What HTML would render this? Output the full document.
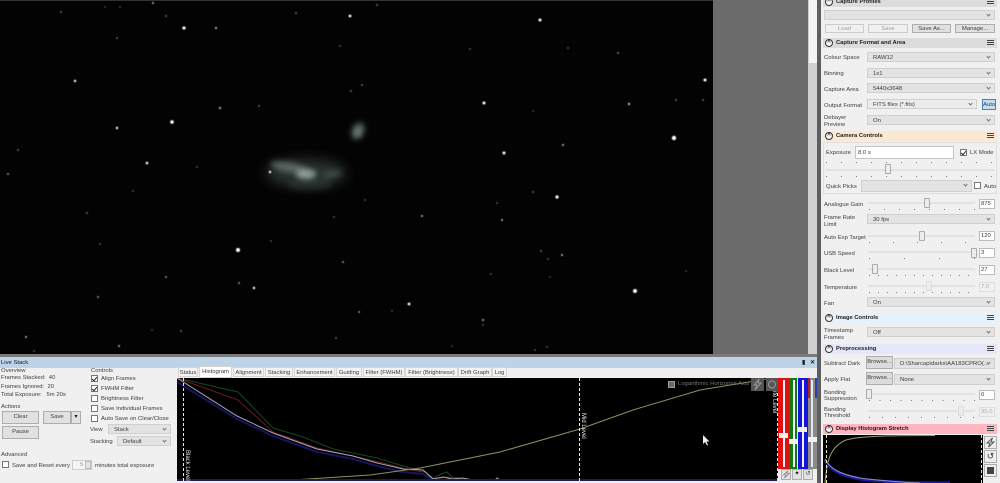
<!DOCTYPE html>
<html><head><meta charset="utf-8"><style>
html,body{margin:0;padding:0;background:#f0f0f0}
#r{position:relative;width:1000px;height:483px;overflow:hidden;font-family:"Liberation Sans",sans-serif;font-size:5.9px;color:#3c3c3c;background:#f0f0f0}
#r div,#r span.t{position:absolute}
.t{white-space:nowrap;line-height:8px;margin-top:1px;filter:blur(.2px)}
.c{background:#e3e3e3;border:1px solid #cfcfcf;box-sizing:border-box;height:10px;line-height:10px;padding-left:5px;white-space:nowrap;overflow:hidden}
.c:after{content:"";position:absolute;right:4px;top:2px;width:2px;height:2px;border-right:1px solid #777;border-bottom:1px solid #777;transform:rotate(45deg)}
.b{background:#e1e1e1;border:1px solid #adadad;box-sizing:border-box;text-align:center;white-space:nowrap}
.d{color:#a0a0a0;background:#f0f0f0;border-color:#ccc}
.h{left:823px;width:174px;height:10px;line-height:11px;font-weight:bold;font-size:5.8px;box-sizing:border-box;padding-left:13px;color:#222;white-space:nowrap}
.h:before{content:"^";position:absolute;left:2px;top:1px;width:6px;height:6px;border:1px solid #333;border-radius:50%;background:#f6f6f6;font-size:6px;line-height:7px;text-align:center;padding:0}
.h:after{content:"";position:absolute;right:3px;top:2px;width:7px;height:5px;background:repeating-linear-gradient(#444 0 1px,transparent 1px 2px)}
.k{height:1px;background:repeating-linear-gradient(90deg,#555 0 1px,transparent 1px 15px);opacity:.75}
.tr{height:2px;background:#e2e2e2;left:868px;width:107px}
.th{width:6px;height:10px;background:#ececec;border:1px solid #aaa;box-sizing:border-box;border-radius:1px}
.v{left:979px;width:16px;height:10px;background:#fff;border:1px solid #bbb;box-sizing:border-box;line-height:9px;padding-left:1px}
.x{width:7px;height:7px;background:#fff;border:1px solid #777;box-sizing:border-box}
.ck:after{content:"";position:absolute;left:1px;top:0;width:2px;height:4px;border-right:1px solid #222;border-bottom:1px solid #222;transform:rotate(40deg)}
.tb{top:367px;height:10px;line-height:10px;background:#f2f2f2;border:1px solid #d5d5d5;box-sizing:border-box;text-align:center;white-space:nowrap;overflow:hidden}
</style></head><body><div id="r">

<svg style="position:absolute;left:0;top:0" width="713" height="355" viewBox="0 0 713 355">
<defs>
<filter id="f1" x="-50%" y="-80%" width="200%" height="260%"><feGaussianBlur stdDeviation="6"/></filter>
<filter id="f2" x="-50%" y="-80%" width="200%" height="260%"><feGaussianBlur stdDeviation="3"/></filter>
<filter id="f3" x="-50%" y="-50%" width="200%" height="200%"><feGaussianBlur stdDeviation=".4"/></filter>
</defs>
<rect width="713" height="355" fill="#040304"/>
<rect width="713" height="1" fill="#333"/>
<ellipse cx="306" cy="173" rx="40" ry="14" fill="#4a5a55" opacity=".55" filter="url(#f1)"/>
<ellipse cx="310" cy="184" rx="22" ry="6" fill="#333f3a" opacity=".5" filter="url(#f2)"/>
<ellipse cx="288" cy="167" rx="18" ry="5" fill="#7f8f88" opacity=".6" filter="url(#f2)" transform="rotate(10 288 167)"/>
<ellipse cx="306" cy="174" rx="10" ry="5" fill="#b5c4bc" opacity=".75" filter="url(#f2)"/>
<ellipse cx="332" cy="174" rx="10" ry="3" fill="#5c6a64" opacity=".55" filter="url(#f2)" transform="rotate(-12 332 174)"/>
<ellipse cx="358" cy="131" rx="6" ry="9" fill="#71817a" opacity=".7" filter="url(#f2)" transform="rotate(25 358 131)"/>
<ellipse cx="358" cy="132" rx="3" ry="4" fill="#a0b0a8" opacity=".5" filter="url(#f2)"/>
<g fill="#fff" filter="url(#f3)">
<circle cx="184" cy="28" r="1.6"/><circle cx="350" cy="16" r="1.4"/><circle cx="172" cy="122" r="1.8"/><circle cx="147" cy="163" r="1.3"/><circle cx="117" cy="128" r="1.2"/>
<circle cx="540" cy="20" r="1.5"/><circle cx="484" cy="103" r="1.5"/><circle cx="504" cy="153" r="1.5"/><circle cx="674" cy="138" r="2.2"/><circle cx="705" cy="80" r="1.5"/>
<circle cx="238" cy="250" r="2"/><circle cx="254" cy="288" r="1.2"/><circle cx="557" cy="197" r="1.6"/><circle cx="409" cy="304" r="1.4"/><circle cx="635" cy="291" r="2"/><circle cx="270" cy="172" r="1.2"/><circle cx="75" cy="81" r="1.2"/>
</g>
<g fill="#bbb" filter="url(#f3)">
<circle cx="153" cy="3" r="1"/><circle cx="216" cy="28" r="1.1"/><circle cx="220" cy="108" r="1.1"/><circle cx="8" cy="174" r=".9"/><circle cx="563" cy="145" r="1"/><circle cx="629" cy="104" r="1.2"/><circle cx="343" cy="262" r=".9"/><circle cx="166" cy="277" r=".9"/><circle cx="98" cy="297" r=".9"/><circle cx="26" cy="337" r="1"/><circle cx="119" cy="346" r="1"/><circle cx="359" cy="312" r=".9"/><circle cx="422" cy="216" r="1"/><circle cx="502" cy="220" r="1"/><circle cx="562" cy="255" r="1"/><circle cx="483" cy="320" r="1"/><circle cx="239" cy="283" r=".9"/>
</g>
<g fill="#666" filter="url(#f3)">
<circle cx="61" cy="12" r="1"/><circle cx="117" cy="38" r="1"/><circle cx="18" cy="150" r="1"/><circle cx="197" cy="167" r=".9"/><circle cx="351" cy="91" r="1"/><circle cx="340" cy="46" r=".9"/><circle cx="259" cy="106" r="1"/><circle cx="166" cy="16" r="1"/><circle cx="296" cy="13" r="1"/><circle cx="120" cy="7" r=".8"/><circle cx="105" cy="7" r=".8"/>
<circle cx="703" cy="100" r="1"/><circle cx="676" cy="100" r="1"/><circle cx="618" cy="53" r="1.1"/><circle cx="470" cy="49" r=".9"/><circle cx="568" cy="48" r=".9"/><circle cx="377" cy="5" r="1"/><circle cx="362" cy="85" r="1"/><circle cx="533" cy="111" r=".8"/>
<circle cx="271" cy="241" r=".9"/><circle cx="334" cy="217" r=".9"/><circle cx="336" cy="338" r="1"/><circle cx="181" cy="331" r="1"/><circle cx="87" cy="213" r="1"/><circle cx="133" cy="191" r=".9"/><circle cx="100" cy="244" r=".9"/><circle cx="152" cy="330" r=".8"/><circle cx="34" cy="351" r=".9"/>
<circle cx="541" cy="251" r="1"/><circle cx="548" cy="259" r=".9"/><circle cx="483" cy="325" r=".9"/><circle cx="533" cy="192" r="1"/><circle cx="497" cy="203" r=".9"/><circle cx="491" cy="274" r=".9"/><circle cx="686" cy="271" r=".8"/><circle cx="365" cy="200" r=".9"/><circle cx="550" cy="277" r=".8"/><circle cx="392" cy="311" r=".8"/><circle cx="452" cy="346" r=".8"/><circle cx="535" cy="350" r=".9"/><circle cx="547" cy="347" r=".9"/>
</g>
</svg>

<div style="left:713px;top:0;width:95px;height:355px;background:#6b6b6b"></div>
<div style="left:808px;top:0;width:10px;height:355px;background:#d0d0d0"></div>
<div style="left:809px;top:0;width:8px;height:63px;background:#f3f3f3"></div>
<div style="left:817px;top:0;width:4px;height:483px;background:#5e5e5e"></div>
<div style="left:0;top:354px;width:817px;height:3px;background:#7a7a7a"></div>

<!-- Live stack panel -->
<div style="left:0;top:357px;width:817px;height:126px;background:#f0f0f0"></div>
<div style="left:0;top:357px;width:817px;height:11px;background:#bcd3e8"></div>
<span class="t" style="left:1px;top:358px;color:#111">Live Stack</span>
<span class="t" style="left:802px;top:358px;color:#222;font-weight:bold">▮</span>
<span class="t" style="left:810px;top:358px;color:#222;font-weight:bold">✕</span>

<span class="t" style="left:1px;top:366px">Overview</span>
<span class="t" style="left:1px;top:373px">Frames Stacked:&nbsp; 40</span>
<span class="t" style="left:1px;top:382px">Frames Ignored:&nbsp; 20</span>
<span class="t" style="left:1px;top:390px">Total Exposure:&nbsp;&nbsp; 5m 20s</span>
<span class="t" style="left:1px;top:402px">Actions</span>
<div class="b" style="left:2px;top:411px;width:37px;height:13px;line-height:11px">Clear</div>
<div class="b" style="left:2px;top:426px;width:37px;height:13px;line-height:11px">Pause</div>
<div class="b" style="left:43px;top:411px;width:28px;height:13px;line-height:11px">Save</div>
<div class="b" style="left:71px;top:411px;width:10px;height:13px;line-height:10px;font-size:6px;color:#111">▾</div>
<span class="t" style="left:1px;top:450px">Advanced</span>
<div class="x" style="left:2px;top:461px"></div>
<span class="t" style="left:12px;top:461px">Save and Reset every</span>
<div class="b" style="left:72px;top:460px;width:20px;height:10px;background:#f4f4f4;color:#999;line-height:9px;text-align:left;padding-left:7px;border-color:#ccc">5</div>
<div style="left:85px;top:461px;width:6px;height:8px;background:#e4e4e4;border:1px solid #bbb;box-sizing:border-box"></div>
<span class="t" style="left:95px;top:461px">minutes total exposure</span>

<span class="t" style="left:91px;top:366px">Controls</span>
<div class="x ck" style="left:91px;top:375px"></div><span class="t" style="left:101px;top:374px">Align Frames</span>
<div class="x ck" style="left:91px;top:385px"></div><span class="t" style="left:101px;top:384px">FWHM Filter</span>
<div class="x" style="left:91px;top:395px"></div><span class="t" style="left:101px;top:394px">Brightness Filter</span>
<div class="x" style="left:91px;top:405px"></div><span class="t" style="left:101px;top:404px">Save Individual Frames</span>
<div class="x" style="left:91px;top:415px"></div><span class="t" style="left:101px;top:414px">Auto Save on Clear/Close</span>
<span class="t" style="left:90px;top:425px">View</span>
<div class="c" style="left:108px;top:424px;width:63px">Stack</div>
<span class="t" style="left:90px;top:437px">Stacking</span>
<div class="c" style="left:117px;top:436px;width:54px">Default</div>

<!-- tabs -->
<div class="tb" style="left:178px;width:20px">Status</div>
<div class="tb" style="left:199px;width:33px;top:366px;height:12px;background:#fff">Histogram</div>
<div class="tb" style="left:233px;width:31px">Alignment</div>
<div class="tb" style="left:265px;width:28px">Stacking</div>
<div class="tb" style="left:294px;width:41px">Enhancement</div>
<div class="tb" style="left:336px;width:26px">Guiding</div>
<div class="tb" style="left:363px;width:42px">Filter (FWHM)</div>
<div class="tb" style="left:405px;width:53px">Filter (Brightness)</div>
<div class="tb" style="left:458px;width:34px">Drift Graph</div>
<div class="tb" style="left:492px;width:15px">Log</div>

<!-- histogram -->
<svg style="position:absolute;left:177px;top:378px" width="601" height="103" viewBox="177 378 601 103">
<rect x="177" y="378" width="601" height="103" fill="#000"/>
<g fill="none" stroke-width="1">
<polyline stroke="#17471e" points="177,378 238,392 273,428 303,437 333,449 377,458 410,468 423,470 433,478 441,474 447,472 453,478 470,479"/>
<polyline stroke="#6b1d1d" points="177,378 238,400 273,432 317,448 357,457 383,463 410,470 425,472 433,479 447,477 470,479"/>
<polyline stroke="#15155e" stroke-width="2" points="177,382 237,419 273,436 317,452 353,459 377,466 403,472 423,474 433,480"/>
<polyline stroke="#a5a5b5" points="177,378 237,416 273,433 317,449 353,456 377,463 403,469 423,470 433,479 443,477 452,479 463,478 472,480 495,480 497,478 500,480"/>
<polyline stroke="#8f8f5f" points="177,480 300,479.500 370,475 420,468 500,452 580,429 633,410 700,390 767,379 778,378"/>
</g>
<rect x="177" y="479" width="601" height="2" fill="#1a1a55"/>
<line x1="183.500" y1="378" x2="183.500" y2="481" stroke="#f2efb0" stroke-dasharray="3 2"/>
<line x1="579.500" y1="378" x2="579.500" y2="481" stroke="#f2efb0" stroke-dasharray="3 2"/>
<line x1="777.500" y1="378" x2="777.500" y2="481" stroke="#f2efb0" stroke-dasharray="3 2"/>
<text x="0" y="0" transform="translate(186 450) rotate(90)" font-size="6" fill="#eee" font-family="Liberation Sans">Black Level</text>
<text x="0" y="0" transform="translate(582 413) rotate(90)" font-size="6" fill="#eee" font-family="Liberation Sans">Mid Level</text>
<text x="0" y="0" transform="translate(773 382) rotate(90)" font-size="6" fill="#eee" font-family="Liberation Sans">White Level</text>
</svg>
<div style="left:668px;top:381px;width:7px;height:7px;background:#6a6a6a;border:1px solid #999;box-sizing:border-box"></div>
<span class="t" style="left:678px;top:379px;color:#777">Logarithmic Horizontal Axis</span>
<div style="left:751px;top:378px;width:13px;height:13px;background:#555"></div>
<div style="left:766px;top:378px;width:12px;height:13px;background:#555"></div>
<svg style="position:absolute;left:751px;top:378px" width="27" height="13" viewBox="0 0 27 13"><path d="M8 1L3 7H6L4 12L10 5H7Z" fill="none" stroke="#999"/><circle cx="21" cy="6.500" r="3.500" fill="none" stroke="#999"/></svg>
<svg style="position:absolute;left:702px;top:435px" width="8" height="11" viewBox="0 0 8 11"><path d="M1 0V9L3 7L5 10.500L6 10L4.500 6.500H7.500Z" fill="#eee"/></svg>

<!-- channel sliders -->
<div style="left:778px;top:378px;width:11px;height:91px;background:#e01010"></div>
<div style="left:789px;top:378px;width:8px;height:91px;background:#117a11"></div>
<div style="left:798px;top:378px;width:10px;height:91px;background:#1414dd"></div>
<div style="left:808px;top:378px;width:9px;height:91px;background:#8a8a8a"></div>
<div style="left:808px;top:378px;width:2px;height:20px;background:#b02020"></div>
<div style="left:815px;top:378px;width:2px;height:20px;background:#2a3fb0"></div>
<div style="left:783px;top:380px;width:2px;height:87px;background:#f2f2f2"></div>
<div style="left:793px;top:380px;width:2px;height:87px;background:#f2f2f2"></div>
<div style="left:802px;top:380px;width:2px;height:87px;background:#f2f2f2"></div>
<div style="left:811px;top:380px;width:2px;height:87px;background:#e8e8e8"></div>
<div style="left:779px;top:433px;width:9px;height:5px;background:#f0f0f0"></div>
<div style="left:789px;top:439px;width:9px;height:5px;background:#f0f0f0"></div>
<div style="left:798px;top:427px;width:9px;height:5px;background:#f0f0f0"></div>
<div style="left:808px;top:437px;width:9px;height:5px;background:#f0f0f0"></div>
<div class="b" style="left:781px;top:469px;width:10px;height:11px"></div>
<svg style="position:absolute;left:782px;top:470px" width="8" height="9" viewBox="0 0 10 11"><path d="M7 1L2 6H5L3 10L9 4H6Z" fill="none" stroke="#888"/></svg>
<div class="b" style="left:792px;top:469px;width:10px;height:11px;line-height:9px;color:#111">✦</div>
<div class="b" style="left:803px;top:469px;width:10px;height:11px;line-height:9px">↺</div>

<!-- Right panel -->
<div style="left:821px;top:0;width:179px;height:483px;background:#f0f0f0"></div>
<div class="h" style="top:-3px;background:#dcdcdc;">Capture Profiles</div>
<div class="c" style="left:824px;top:10px;width:171px"></div>
<div class="b d" style="left:825px;top:24px;width:39px;height:9px;line-height:8px">Load</div>
<div class="b d" style="left:868px;top:24px;width:40px;height:9px;line-height:8px">Save</div>
<div class="b" style="left:912px;top:24px;width:39px;height:9px;line-height:8px">Save As...</div>
<div class="b" style="left:955px;top:24px;width:40px;height:9px;line-height:8px">Manage...</div>

<div class="h" style="top:38px;background:#dcdcdc">Capture Format and Area</div>
<span class="t" style="left:824px;top:53px">Colour Space</span><div class="c" style="left:867px;top:52px;width:128px">RAW12</div>
<span class="t" style="left:824px;top:69px">Binning</span><div class="c" style="left:867px;top:68px;width:128px">1x1</div>
<span class="t" style="left:824px;top:85px">Capture Area</span><div class="c" style="left:867px;top:83px;width:128px">5440x3648</div>
<span class="t" style="left:824px;top:101px">Output Format</span><div class="c" style="left:867px;top:99px;width:110px;background:#ececec">FITS files (*.fits)</div>
<div class="b" style="left:982px;top:99px;width:14px;height:11px;background:#c6def2;border-color:#3d84c0;line-height:10px">Auto</div>
<span class="t" style="left:824px;top:113px">Debayer</span><span class="t" style="left:824px;top:120px">Preview</span><div class="c" style="left:867px;top:115px;width:128px">On</div>

<div class="h" style="top:131px;background:#fbe8d2">Camera Controls</div>
<div style="left:823px;top:142px;width:174px;height:52px;border:1px solid #dedede;box-sizing:border-box"></div>
<span class="t" style="left:826px;top:148px">Exposure</span>
<div style="left:855px;top:146px;width:99px;height:13px;background:#fff;border:1px solid #c4c4c4;box-sizing:border-box;line-height:12px;padding-left:2px">8.0 s</div>
<div class="x ck" style="left:960px;top:149px"></div><span class="t" style="left:970px;top:148px">LX Mode</span>
<div class="k" style="left:826px;top:162px;width:168px"></div>
<div class="tr" style="left:826px;top:169px;width:168px"></div>
<div class="th" style="left:885px;top:164px"></div>
<div class="k" style="left:826px;top:176px;width:168px"></div>
<span class="t" style="left:826px;top:182px">Quick Picks</span>
<div class="c" style="left:861px;top:180px;width:111px;height:12px"></div>
<div class="x" style="left:974px;top:182px"></div><span class="t" style="left:984px;top:182px">Auto</span>

<span class="t" style="left:824px;top:200px">Analogue Gain</span>
<div class="tr" style="top:202px"></div><div class="th" style="left:924px;top:198px"></div><div class="k" style="left:869px;top:209px;width:106px"></div><div class="v" style="top:199px">875</div>
<span class="t" style="left:824px;top:213px">Frame Rate</span><span class="t" style="left:824px;top:220px">Limit</span><div class="c" style="left:867px;top:214px;width:128px">30 fps</div>
<span class="t" style="left:824px;top:233px">Auto Exp Target</span>
<div class="tr" style="top:235px"></div><div class="th" style="left:919px;top:231px"></div><div class="k" style="left:869px;top:242px;width:106px;background:repeating-linear-gradient(90deg,#555 0 1px,transparent 1px 24px)"></div><div class="v" style="top:231px">120</div>
<span class="t" style="left:824px;top:249px">USB Speed</span>
<div class="tr" style="top:251px"></div><div class="th" style="left:971px;top:248px"></div><div class="k" style="left:869px;top:258px;width:106px;background:repeating-linear-gradient(90deg,#555 0 1px,transparent 1px 35px)"></div><div class="v" style="top:248px">3</div>
<span class="t" style="left:824px;top:266px">Black Level</span>
<div class="tr" style="top:268px"></div><div class="th" style="left:872px;top:264px"></div><div class="k" style="left:869px;top:275px;width:106px;background:repeating-linear-gradient(90deg,#555 0 1px,transparent 1px 9px)"></div><div class="v" style="top:265px">27</div>
<span class="t" style="left:824px;top:283px">Temperature</span>
<div class="tr" style="top:285px"></div><div class="th" style="left:926px;top:281px;border-color:#ddd"></div><div class="k" style="left:869px;top:292px;width:106px;background:repeating-linear-gradient(90deg,#555 0 1px,transparent 1px 9px)"></div><div class="v" style="top:282px;background:#f0f0f0;color:#aaa;border-color:#ddd">7.0</div>
<span class="t" style="left:824px;top:299px">Fan</span><div class="c" style="left:867px;top:297px;width:128px">On</div>

<div class="h" style="top:313px;background:#e5f1fb">Image Controls</div>
<span class="t" style="left:824px;top:326px">Timestamp</span><span class="t" style="left:824px;top:333px">Frames</span><div class="c" style="left:867px;top:327px;width:128px">Off</div>

<div class="h" style="top:344px;background:#e6e6fa">Preprocessing</div>
<span class="t" style="left:824px;top:359px">Subtract Dark</span>
<div class="b" style="left:866px;top:356px;width:27px;height:13px;line-height:11px;background:#dcdcdc">Browse...</div>
<div class="c" style="left:894px;top:358px;width:101px;height:11px">D:\Sharcap\darks\AA183CPRO(...</div>
<span class="t" style="left:824px;top:375px">Apply Flat</span>
<div class="b" style="left:866px;top:372px;width:27px;height:13px;line-height:11px;background:#dcdcdc">Browse...</div>
<div class="c" style="left:894px;top:374px;width:101px;height:11px">None</div>
<span class="t" style="left:824px;top:388px">Banding</span><span class="t" style="left:824px;top:394px">Suppression</span>
<div class="tr" style="top:393px"></div><div class="th" style="left:866px;top:389px"></div><div class="k" style="left:869px;top:400px;width:106px;background:repeating-linear-gradient(90deg,#555 0 1px,transparent 1px 10.500px)"></div><div class="v" style="top:390px">0</div>
<span class="t" style="left:824px;top:405px">Banding</span><span class="t" style="left:824px;top:411px">Threshold</span>
<div class="tr" style="top:410px"></div><div class="th" style="left:958px;top:406px;border-color:#ddd"></div><div class="k" style="left:869px;top:417px;width:106px;background:repeating-linear-gradient(90deg,#555 0 1px,transparent 1px 13px)"></div><div class="v" style="top:407px;background:#f0f0f0;color:#aaa;border-color:#ddd">35.0</div>

<div class="h" style="top:424px;background:#ffb6c1;color:#3a0a12">Display Histogram Stretch</div>
<svg style="position:absolute;left:823px;top:435px" width="160" height="48" viewBox="823 435 160 48">
<rect x="823" y="435" width="160" height="48" fill="#000"/>
<path d="M825 483C827 460 830 447 846 440C860 436 890 435.500 935 435.500" fill="none" stroke="#9a9a70"/>
<path d="M825 460C830 470 840 475 860 479C880 482 920 483 950 483" fill="none" stroke="#1a1aaa" stroke-width="3"/>
<path d="M825 459C830 469 840 474 860 478C880 481 900 482 920 483" fill="none" stroke="#8e8eb8"/>
<line x1="826.500" y1="435" x2="826.500" y2="483" stroke="#e8e6a6" stroke-dasharray="3 2"/>
<line x1="981.500" y1="435" x2="981.500" y2="483" stroke="#e8e6a6" stroke-dasharray="3 2"/>
</svg>
<div class="b" style="left:984px;top:436px;width:13px;height:13px;background:#eee"></div>
<svg style="position:absolute;left:985px;top:437px" width="11" height="11" viewBox="0 0 11 11"><path d="M7.500 1L2 6H5L3.500 10L9 5H6Z" fill="none" stroke="#555"/></svg>
<div class="b" style="left:984px;top:450px;width:13px;height:13px;line-height:11px;background:#eee;font-size:9px">↺</div>
<div class="b" style="left:984px;top:464px;width:13px;height:13px;background:#eee"></div>
<div style="left:987px;top:467px;width:7px;height:7px;background:#444"></div>
</div></body></html>
